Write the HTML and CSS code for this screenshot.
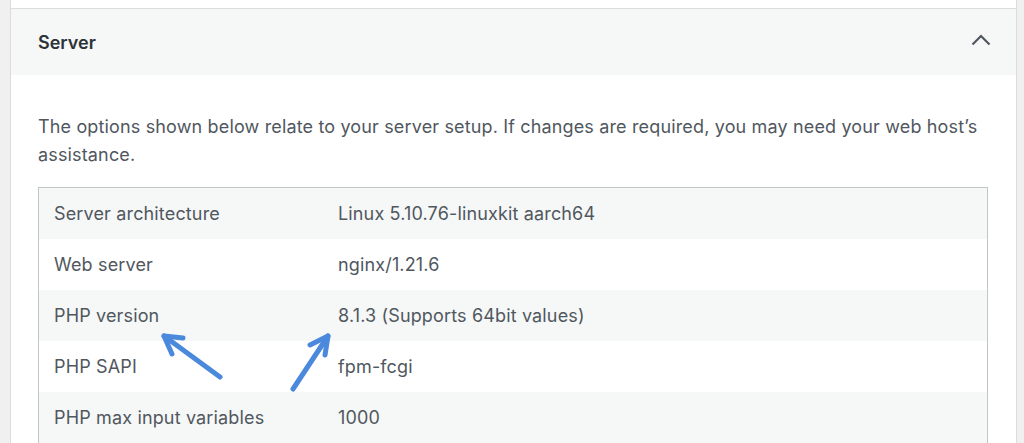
FILE: index.html
```html
<!DOCTYPE html>
<html lang="en">
<head>
    <meta charset="UTF-8">
    <meta name="viewport" content="width=device-width, initial-scale=1.0">
    <title>Site Health - Server</title>
    <link rel="stylesheet" href="styles.css">
</head>
<body>
    <div class="panel">
        <div class="prev-item"></div>

        <div class="section">
            <div class="section-header">
                <h2>Server</h2>
                <svg class="chevron" width="20" height="12" viewBox="0 0 20 12">
                    <path d="M1.5 10.5 L10 2 L18.5 10.5" fill="none" stroke="#50575e" stroke-width="2.2"/>
                </svg>
            </div>

            <div class="section-body">
                <p>The options shown below relate to your server setup. If changes are required, you may need your web host’s assistance.</p>

                <table class="info-table">
                    <tr>
                        <td>Server architecture</td>
                        <td>Linux 5.10.76-linuxkit aarch64</td>
                    </tr>
                    <tr>
                        <td>Web server</td>
                        <td>nginx/1.21.6</td>
                    </tr>
                    <tr>
                        <td>PHP version</td>
                        <td>8.1.3 (Supports 64bit values)</td>
                    </tr>
                    <tr>
                        <td>PHP SAPI</td>
                        <td>fpm-fcgi</td>
                    </tr>
                    <tr>
                        <td>PHP max input variables</td>
                        <td>1000</td>
                    </tr>
                </table>
            </div>
        </div>
    </div>

    <!-- annotation arrows drawn over the screenshot -->
    <svg class="arrows" width="1024" height="443" viewBox="0 0 1024 443">
        <g fill="none" stroke="#4a89dc" stroke-width="5" stroke-linecap="round" stroke-linejoin="round">
            <path d="M220 377 L164 336"/>
            <path d="M183 338 L164 336 L172 354"/>
            <path d="M293 389 L328 336"/>
            <path d="M310 345 L328 336 L325 355"/>
        </g>
    </svg>
</body>
</html>
```

FILE: styles.css
```css
:root {
    --gray-bg: #f0f0f1;
    --row-gray: #f6f7f7;
    --border: #c3c4c7;
    --text: #50575e;
    --heading: #2c3338;
}

body {
    margin: 0;
    background: var(--gray-bg);
    font-family: Inter, "Liberation Sans", sans-serif;
    color: var(--text);
    height: 443px;
    overflow: hidden;
}

.panel {
    margin: 0 7px 0 10px;
    background: white;
    border-left: 1px solid #dcdcde;
    border-right: 1px solid #dcdcde;
    min-height: 443px;
}

.prev-item {
    height: 8px;
}

.section {
    border-top: 1px solid #dcdcde;
}

/* Accordion header */
.section-header {
    height: 66px;
    background: var(--row-gray);
    display: flex;
    align-items: center;
    justify-content: space-between;
    padding: 0 25px 0 27px;
}

.section-header h2 {
    margin: 0;
    font-size: 18px;
    font-weight: 600;
    color: var(--heading);
}

.chevron {
    margin-top: -4px;
}

/* Body */
.section-body {
    padding: 38px 28px 0 27px;
    letter-spacing: 0.15px;
}

.section-body p {
    margin: 0 0 18px;
    font-size: 18px;
    line-height: 28px;
}

.info-table {
    width: 100%;
    border-collapse: collapse;
    border: 1px solid var(--border);
    table-layout: fixed;
    font-size: 18px;
}

.info-table tr:nth-child(odd) {
    background: var(--row-gray);
}

.info-table td {
    padding: 12px 15px;
    line-height: 27px;
}

.info-table td:first-child {
    width: 254px;
}

.arrows {
    position: absolute;
    top: 0;
    left: 0;
    pointer-events: none;
}
```
